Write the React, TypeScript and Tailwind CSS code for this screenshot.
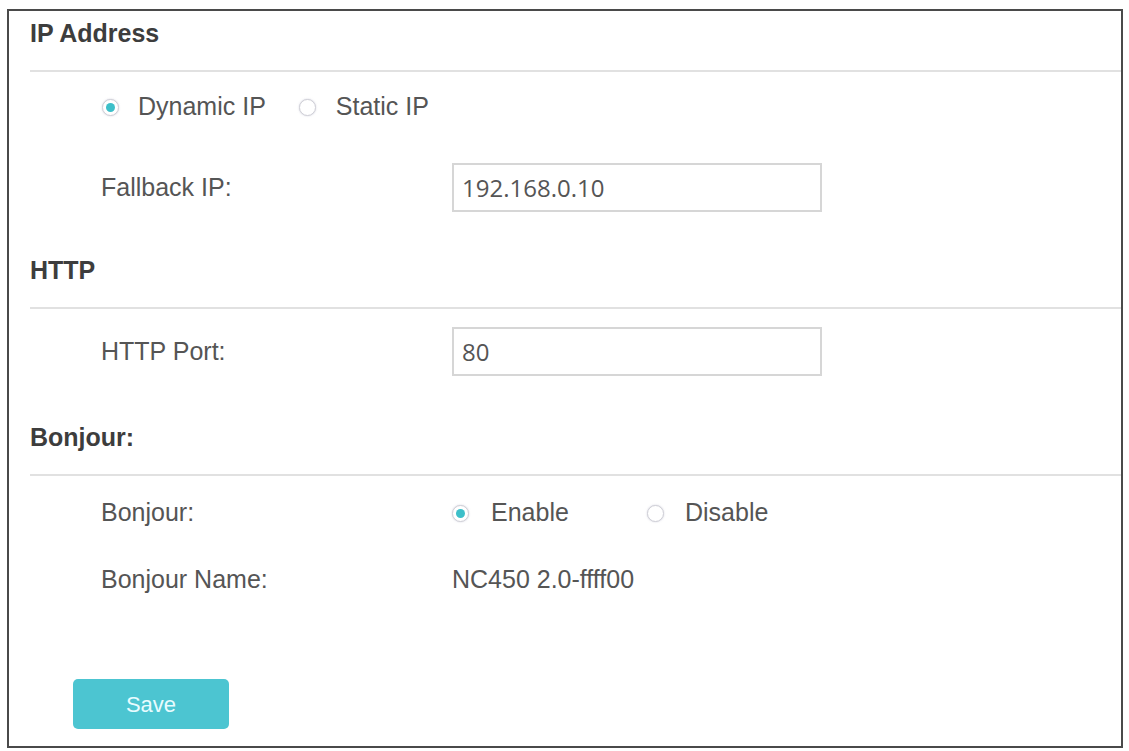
function Radio({ checked }: { checked: boolean }) {
  return (
    <span className="flex h-[17px] w-[17px] shrink-0 items-center justify-center rounded-full border border-[#cfcfd6] bg-white shadow-[0_0_2px_rgba(180,180,200,0.6)]">
      {checked && <span className="h-[9px] w-[9px] rounded-full bg-[#3dbfc9]" />}
    </span>
  );
}

function SectionTitle({ title, mt }: { title: string; mt: string }) {
  return (
    <div className={mt}>
      <div className="flex h-[46px] items-center pl-[21px] text-[25px] font-bold text-[#3d3d3d]">{title}</div>
      <div className="ml-[21px] mt-[13px] h-[2px] bg-[#e1e1e1]" />
    </div>
  );
}

function TextField({ value }: { value: string }) {
  return (
    <div className="flex h-[49px] w-[370px] items-center border-2 border-[#d6d6d6] pl-[8px] font-['Open_Sans',sans-serif] text-[24px] text-[#555]">
      {value}
    </div>
  );
}

export default function App() {
  return (
    <div className="h-[751px] w-[1129px] bg-white pl-[7px] pt-[9px] font-['Liberation_Sans',Arial,sans-serif] text-[25px] text-[#555]">
      <div className="flex h-[739px] w-[1116px] flex-col border-2 border-[#4a4a4a]">
        <SectionTitle title="IP Address" mt="" />

        {/* ip mode */}
        <div className="flex h-[70px] items-center pl-[93px]">
          <Radio checked />
          <span className="ml-[19px]">Dynamic IP</span>
          <span className="ml-[33px]"><Radio checked={false} /></span>
          <span className="ml-[20px]">Static IP</span>
        </div>

        <div className="mt-[21px] flex items-center">
          <span className="w-[443px] pl-[92px]">Fallback IP:</span>
          <TextField value="192.168.0.10" />
        </div>

        <SectionTitle title="HTTP" mt="mt-[36px]" />

        <div className="mt-[18px] flex items-center">
          <span className="w-[443px] pl-[92px]">HTTP Port:</span>
          <TextField value="80" />
        </div>

        <SectionTitle title="Bonjour:" mt="mt-[39px]" />

        <div className="flex h-[74px] items-center">
          <span className="w-[443px] pl-[92px]">Bonjour:</span>
          <Radio checked />
          <span className="ml-[22px] w-[156px]">Enable</span>
          <Radio checked={false} />
          <span className="ml-[21px]">Disable</span>
        </div>

        <div className="flex h-[60px] items-center">
          <span className="w-[443px] pl-[92px]">Bonjour Name:</span>
          <span>NC450 2.0-ffff00</span>
        </div>

        <button className="ml-[64px] mt-[69px] flex h-[50px] w-[156px] items-center justify-center rounded-[5px] bg-[#4cc5d1] text-[22px] text-[#e8fcff]">
          Save
        </button>
      </div>
    </div>
  );
}
